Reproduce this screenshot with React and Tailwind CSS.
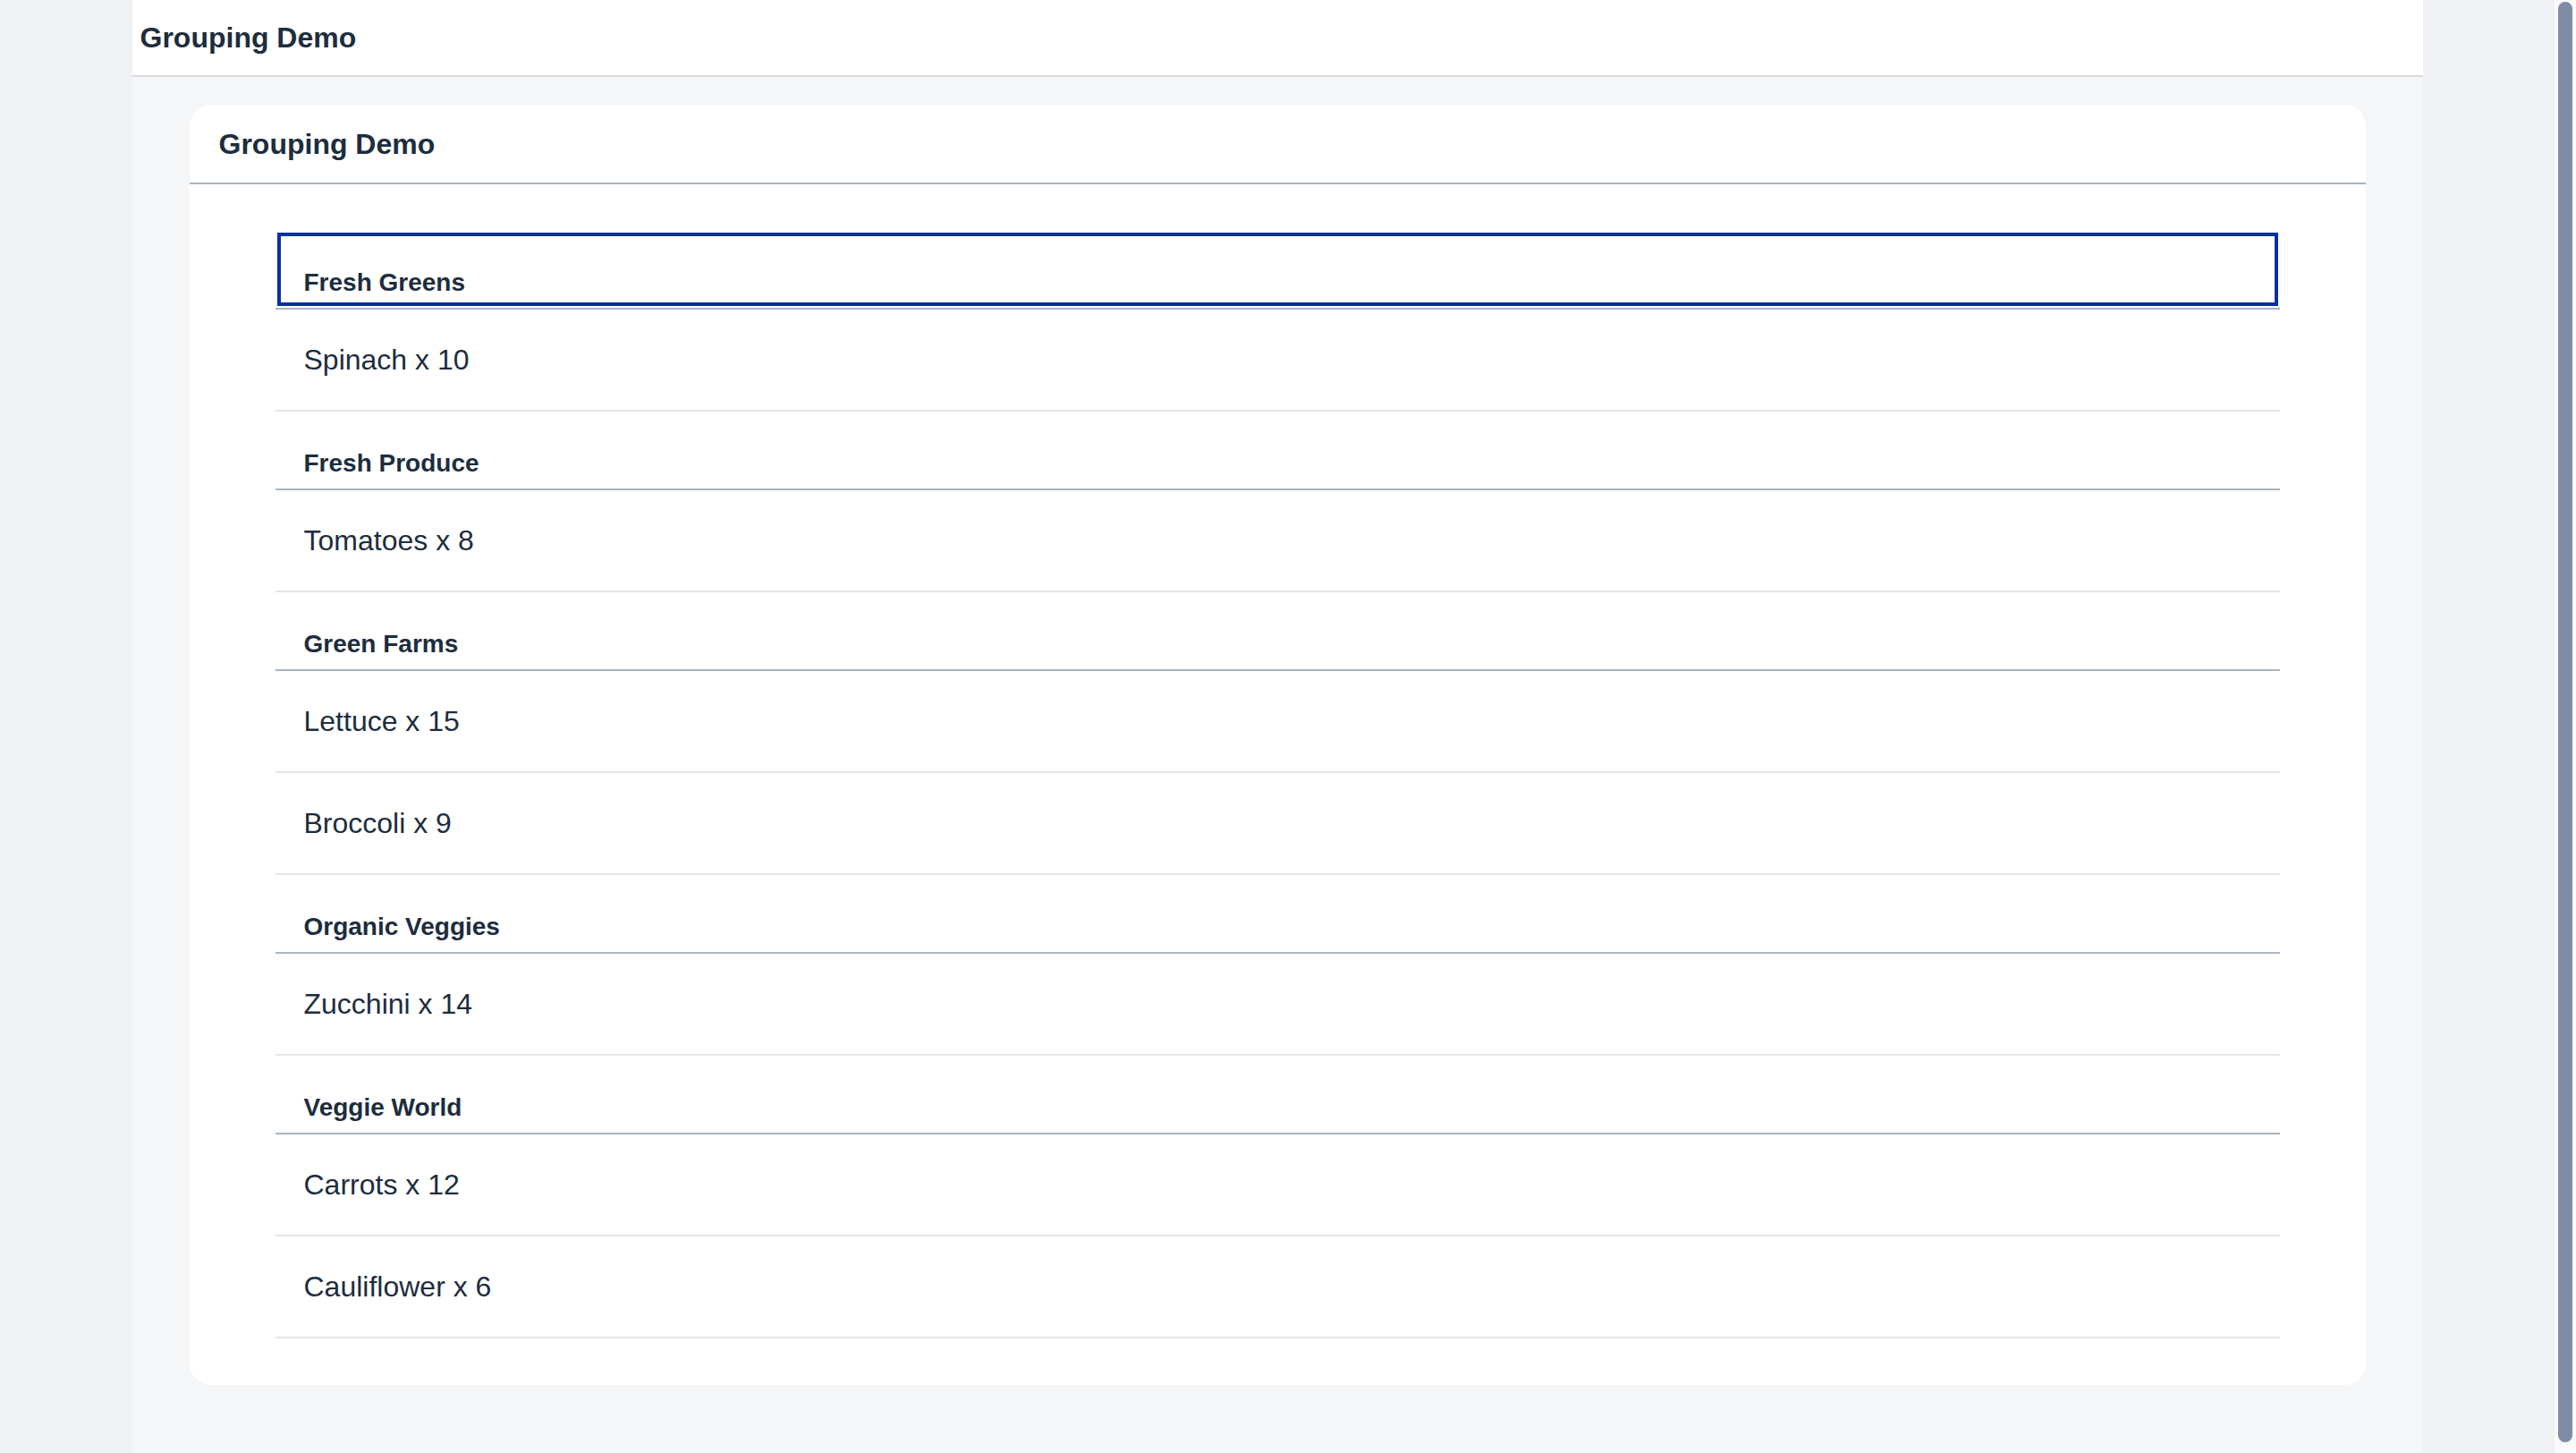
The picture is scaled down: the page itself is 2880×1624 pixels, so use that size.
import React from "react";

const groups = [
  { name: "Fresh Greens", items: ["Spinach x 10"] },
  { name: "Fresh Produce", items: ["Tomatoes x 8"] },
  { name: "Green Farms", items: ["Lettuce x 15", "Broccoli x 9"] },
  { name: "Organic Veggies", items: ["Zucchini x 14"] },
  { name: "Veggie World", items: ["Carrots x 12", "Cauliflower x 6"] },
];

function GroupHeader({ name, focused }) {
  return (
    <li className="relative flex h-[88px] items-end border-b-2 border-[#a9b4be] px-[32px] pb-[10px]">
      <span className="text-[28px] leading-[36px] font-bold text-[#1d2d3e]">{name}</span>
      {focused && (
        <div className="pointer-events-none absolute top-[2px] left-[2px] right-[2px] bottom-[2px] border-4 border-[#0a2fa3]" />
      )}
    </li>
  );
}

function Item({ label }) {
  return (
    <li className="flex h-[114px] items-center border-b-2 border-[#e5e5e5] px-[32px]">
      <span className="text-[32px] leading-[40px] text-[#1d2d3e]">{label}</span>
    </li>
  );
}

export default function App() {
  return (
    <div
      className="flex h-[1624px] w-full overflow-hidden bg-[#eff1f4]"
      style={{ fontFamily: '"Liberation Sans", Arial, sans-serif' }}
    >
      <div className="flex-1 min-w-0">
        <div className="mx-auto flex h-full w-[2561px] flex-col bg-[#f5f6f7]">
          <header className="flex h-[86px] shrink-0 items-center border-b-2 border-[#d9dbde] bg-white px-[9px]">
            <h1 className="text-[32px] leading-[40px] font-bold text-[#1d2d3e]">Grouping Demo</h1>
          </header>
          <main className="px-[64px] pt-[31px]">
            <section className="rounded-[24px] bg-white">
              <div className="flex h-[89px] items-center border-b-2 border-[#a9b4be] px-[33px]">
                <h2 className="text-[32px] leading-[40px] font-bold text-[#1d2d3e]">Grouping Demo</h2>
              </div>
              <div className="px-[96px] pt-[52px] pb-[52px]">
                <ul>
                  {groups.map((g, gi) => (
                    <React.Fragment key={g.name}>
                      <GroupHeader name={g.name} focused={gi === 0} />
                      {g.items.map((it) => (
                        <Item key={it} label={it} />
                      ))}
                    </React.Fragment>
                  ))}
                </ul>
              </div>
            </section>
          </main>
        </div>
      </div>
      <div className="flex w-[24px] shrink-0 justify-center bg-[#fafafa] pt-[2px] pb-[12px]">
        <div className="h-full w-[16px] rounded-full bg-[#7f8da4]" />
      </div>
    </div>
  );
}
